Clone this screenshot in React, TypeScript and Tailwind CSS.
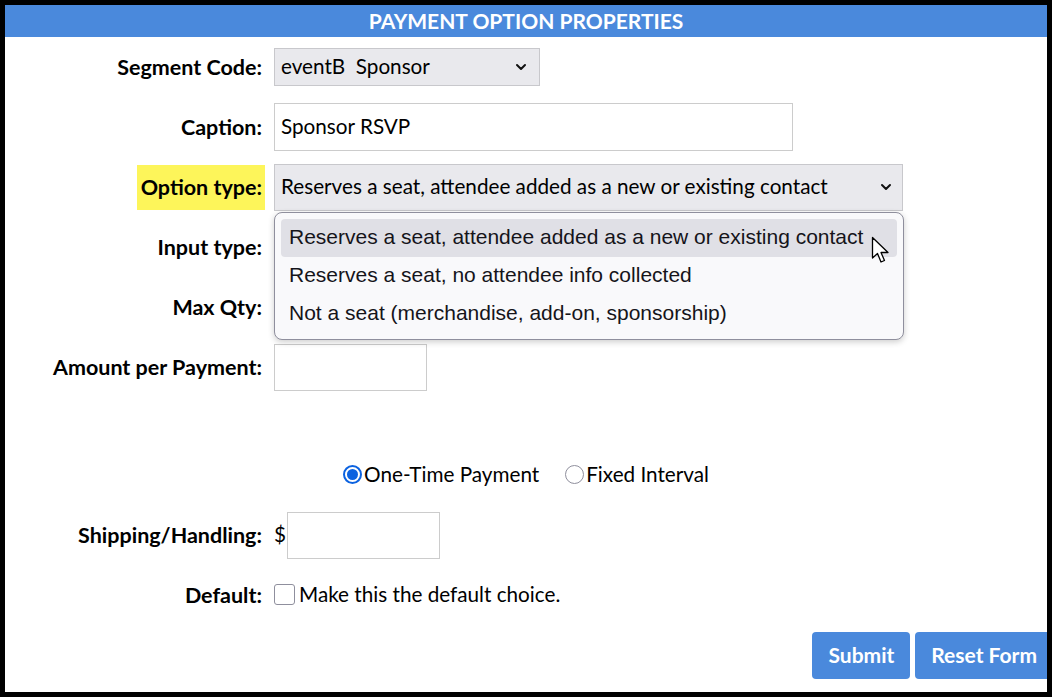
import React from 'react';

const lato = "font-['Lato','Liberation_Sans',sans-serif]";

function Chevron() {
  return (
    <svg width="12" height="8" viewBox="0 0 12 8" className="shrink-0">
      <polyline points="2,2 6,6 10,2" fill="none" stroke="#111" strokeWidth="2" strokeLinecap="round" strokeLinejoin="round" />
    </svg>
  );
}

function Cursor() {
  return (
    <svg width="22" height="30" viewBox="0 0 22 30" className="absolute left-[596px] top-[23px]">
      <path d="M1.5 1.5 L1.5 22 L6.5 17.5 L10 26 L13.5 24.5 L10 16.5 L17 16.5 Z" fill="#fff" stroke="#000" strokeWidth="1.3" strokeLinejoin="round" />
    </svg>
  );
}

function Label({ children }: { children: React.ReactNode }) {
  return <div className="text-right text-[21.5px] font-bold text-black">{children}</div>;
}

function Row({ label, children, h = 'h-[60px]' }: { label: React.ReactNode; children?: React.ReactNode; h?: string }) {
  return (
    <div className={`grid grid-cols-[257px_1fr] items-center gap-x-3 ${h}`}>
      {label}
      <div className="flex items-center">{children}</div>
    </div>
  );
}

const options = [
  'Reserves a seat, attendee added as a new or existing contact',
  'Reserves a seat, no attendee info collected',
  'Not a seat (merchandise, add-on, sponsorship)',
];

export default function App() {
  return (
    <div className="h-[697px] w-[1052px] bg-black p-[5px]">
      <div className={`h-[687px] w-[1042px] overflow-hidden bg-white ${lato}`}>
        <div className="flex h-[32px] items-center justify-center bg-[#4a89dc] text-[21px] font-bold text-white">
          PAYMENT OPTION PROPERTIES
        </div>

        <Row label={<Label>Segment Code:</Label>}>
          <div className="flex h-[38px] w-[266px] items-center justify-between border border-[#c8c8cc] bg-[#e9e9ed] pl-[6px] pr-[12px] text-[20.7px] text-black">
            <span className="whitespace-pre">eventB  Sponsor</span>
            <Chevron />
          </div>
        </Row>

        <Row label={<Label>Caption:</Label>}>
          <div className="flex h-[48px] w-[519px] items-center border border-[#cccccc] pl-[6px] text-[20.7px] text-black">
            Sponsor RSVP
          </div>
        </Row>

        <Row
          label={
            <div className="mr-[-3px] flex justify-end">
              <div className="flex h-[45px] items-center bg-[#fdf55a] pl-[4px] pr-[3px] text-[21.5px] font-bold text-black">
                Option type:
              </div>
            </div>
          }
        >
          <div className="relative">
            <div className="flex h-[47px] w-[629px] items-center justify-between border border-[#c8c8cc] bg-[#e9e9ed] pl-[6px] pr-[10px] text-[20.7px] text-black">
              <span>{options[0]}</span>
              <Chevron />
            </div>
            <div className="absolute left-0 top-[48px] z-10 w-[630px] rounded-[8px] border border-[#8f8f9d] bg-[#f9f9fb] p-[6px] font-['Liberation_Sans',Arial,sans-serif] text-[21px] text-[#15141a] shadow-[0_2px_6px_rgba(0,0,0,0.2)]">
              {options.map((o, i) => (
                <div
                  key={o}
                  className={`flex h-[38px] items-center rounded-[4px] pb-[2px] pl-[8px] ${i === 0 ? 'bg-[#e0e0e6]' : ''}`}
                >
                  {o}
                </div>
              ))}
              <Cursor />
            </div>
          </div>
        </Row>

        <Row label={<Label>Input type:</Label>} />
        <Row label={<Label>Max Qty:</Label>} />

        <Row label={<Label>Amount per Payment:</Label>}>
          <div className="h-[47px] w-[153px] border border-[#cccccc]" />
        </Row>

        <div className="h-[48px]" />

        <div className="flex h-[60px] items-center justify-center text-[20.7px] text-black">
          <label className="flex items-center">
            <span className="mr-[2px] flex h-[19px] w-[19px] items-center justify-center rounded-full border-2 border-[#0b62e0] bg-white">
              <span className="h-[11px] w-[11px] rounded-full bg-[#0b62e0]" />
            </span>
            One-Time Payment
          </label>
          <label className="ml-[26px] flex items-center">
            <span className="mr-[2px] h-[19px] w-[19px] rounded-full border border-[#8f8f9d] bg-white" />
            Fixed Interval
          </label>
        </div>

        <Row label={<Label>Shipping/Handling:</Label>}>
          <span className="mr-[1px] text-[20.7px] text-black">$</span>
          <div className="h-[47px] w-[153px] border border-[#cccccc]" />
        </Row>

        <Row label={<Label>Default:</Label>}>
          <span className="mr-[4px] h-[21px] w-[21px] rounded-[3px] border border-[#8f8f9d] bg-white" />
          <span className="text-[20.7px] text-black">Make this the default choice.</span>
        </Row>

        <div className="mr-[-6px] flex h-[60px] items-center justify-end gap-[5px]">
          <button className="h-[47px] rounded-[4px] bg-[#4a89dc] px-[16px] text-[21px] font-bold text-white">Submit</button>
          <button className="h-[47px] rounded-[4px] bg-[#4a89dc] px-[16px] text-[21px] font-bold text-white">Reset Form</button>
        </div>
      </div>
    </div>
  );
}
